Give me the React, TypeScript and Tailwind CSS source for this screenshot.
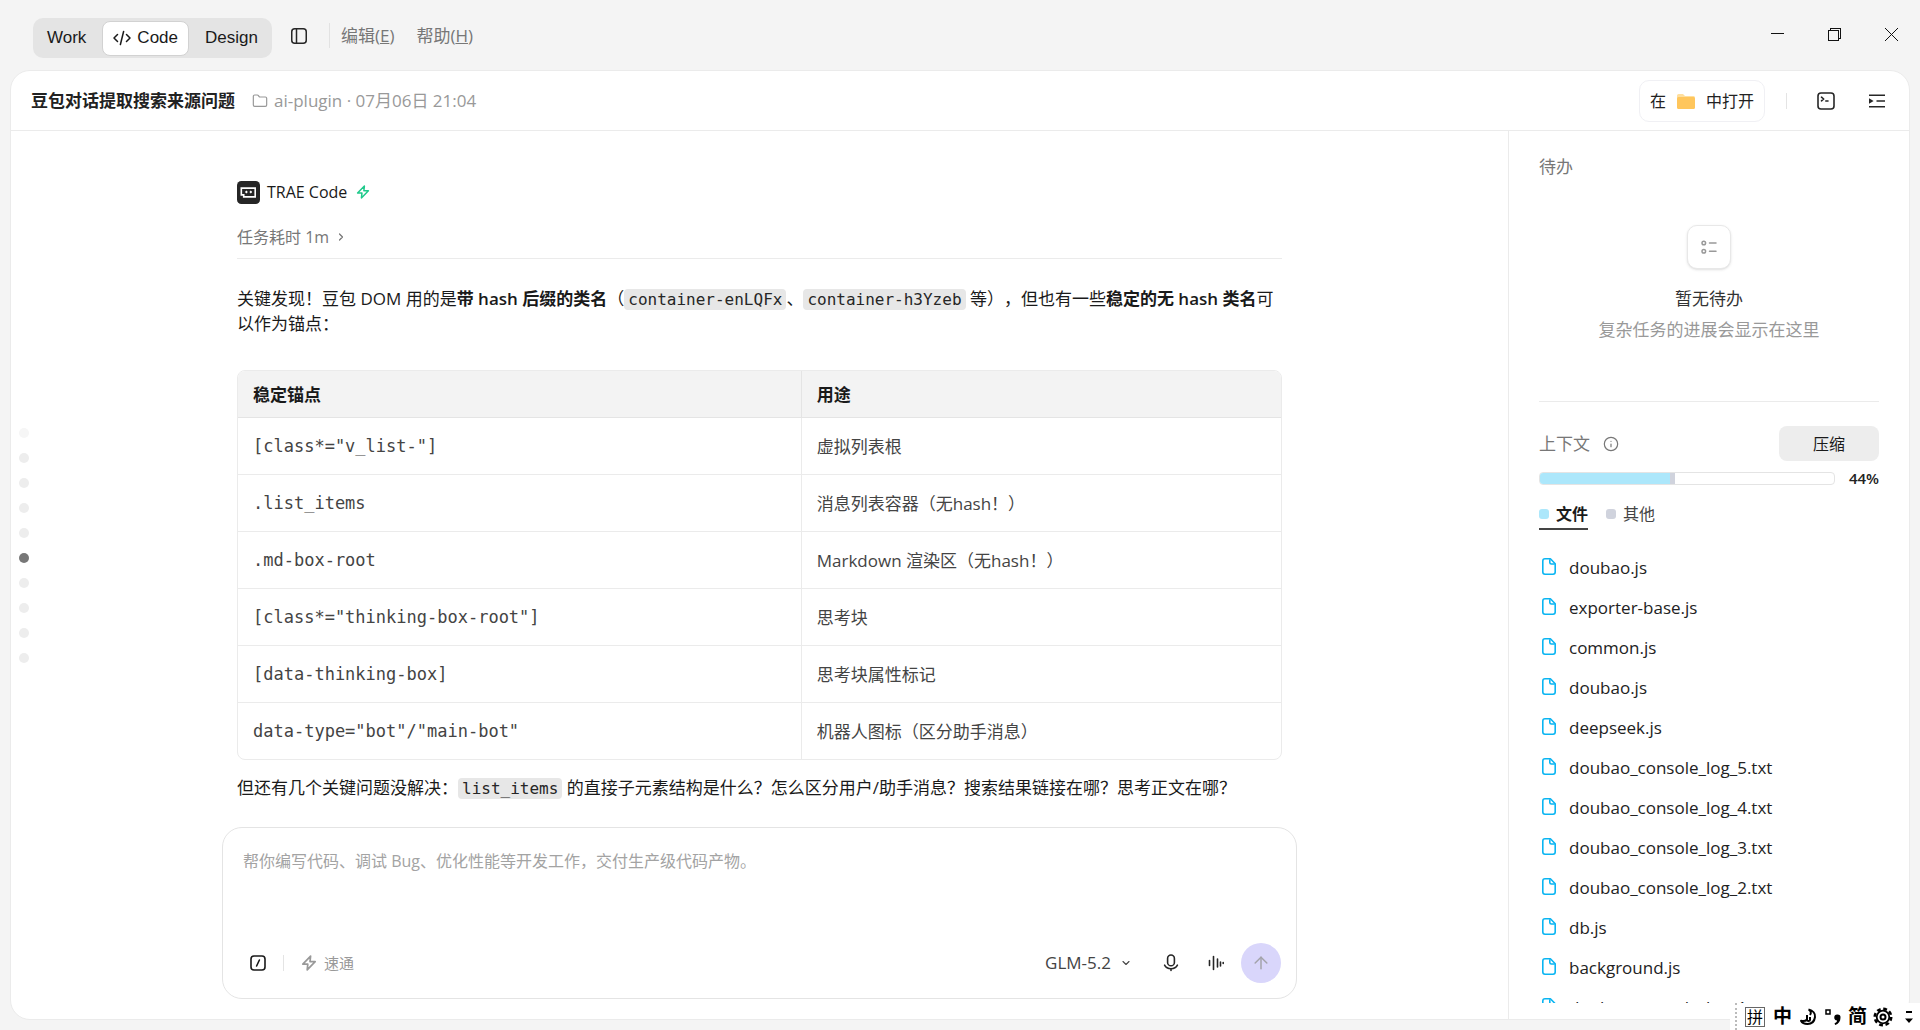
import { useState } from 'react';
import { ArrowUp, ChevronDown, ChevronRight, Folder, Info } from 'lucide-react';

interface AnchorRow {
  anchor: string;
  usage: string;
}

const anchorRows: AnchorRow[] = [
  { anchor: '[class*="v_list-"]', usage: '虚拟列表根' },
  { anchor: '.list_items', usage: '消息列表容器（无hash！）' },
  { anchor: '.md-box-root', usage: 'Markdown 渲染区（无hash！）' },
  { anchor: '[class*="thinking-box-root"]', usage: '思考块' },
  { anchor: '[data-thinking-box]', usage: '思考块属性标记' },
  { anchor: 'data-type="bot"/"main-bot"', usage: '机器人图标（区分助手消息）' },
];

const contextFiles = [
  'doubao.js',
  'exporter-base.js',
  'common.js',
  'doubao.js',
  'deepseek.js',
  'doubao_console_log_5.txt',
  'doubao_console_log_4.txt',
  'doubao_console_log_3.txt',
  'doubao_console_log_2.txt',
  'db.js',
  'background.js',
  'doubao_console_log_1.txt',
];

const usage = { files: 44.4, other: 1.6 };

function BoltIcon({ className = '' }: { className?: string }) {
  return (
    <svg viewBox="0 0 16 16" className={className} fill="none" stroke="currentColor" strokeWidth="1.7" strokeLinejoin="round">
      <path d="M9.6 1.2 1.8 9.2h5L6.2 14.8l8-8.2H9z" />
    </svg>
  );
}

function FileIcon() {
  return (
    <svg viewBox="0 0 14 17" className="mb-1 ml-px mr-px h-[17px] w-[14px] shrink-0 text-[#0ab5f2]" fill="none" stroke="currentColor" strokeWidth="1.6" strokeLinejoin="round">
      <path d="M3 .8h5.400l4.800 4.900v8.300A2.200 2.200 0 0 1 11 16.200H3A2.200 2.200 0 0 1 .8 14V3A2.200 2.200 0 0 1 3 .8z" />
      <path d="M7.800 1.200v3.200A1.600 1.600 0 0 0 9.400 6h3.400" />
    </svg>
  );
}

function InlineCode({ children }: { children: string }) {
  return (
    <code className="rounded bg-[#e7e7e7] px-1 py-px font-['DejaVu_Sans_Mono',monospace] text-base leading-4 text-[#262626]">
      {children}
    </code>
  );
}

function TitleBar() {
  const [mode, setMode] = useState('Code');

  return (
    <header className="flex h-[70px] shrink-0 items-start justify-between pl-[23px] pr-[5px]">
      <div className="flex items-center pt-[18px]">
        <div className="flex h-10 items-center gap-1 rounded-[10px] bg-[#e4e4e4] px-[2px] font-['Liberation_Sans',Arial,sans-serif] text-[17px] text-[#1a1a1a]">
          {['Work', 'Code', 'Design'].map((name) => (
            <button
              key={name}
              onClick={() => setMode(name)}
              className={`flex h-[35px] items-center gap-[6px] rounded-lg ${
                name === mode ? 'border border-[#d2d2d2] bg-white px-[10px]' : 'px-3'
              }`}
            >
              {name === 'Code' && (
                <svg viewBox="0 0 18 16" className="h-4 w-[18px]" fill="none" stroke="currentColor" strokeWidth="1.5" strokeLinecap="round" strokeLinejoin="round">
                  <path d="M4.500 4.500 1 8l3.500 3.500M13.500 4.500 17 8l-3.500 3.500M10.600 1.500 7.400 14.500" />
                </svg>
              )}
              {name}
            </button>
          ))}
        </div>
        <button aria-label="切换侧栏" className="mb-[5px] ml-[18px] text-[#262626]">
          <svg viewBox="0 0 18 18" className="h-[18px] w-[18px]" fill="none" stroke="currentColor" strokeWidth="1.5">
            <rect x="1.750" y="1.750" width="14.500" height="14.500" rx="3" />
            <path d="M6.500 2v14" />
          </svg>
        </button>
        <div className="mb-[6px] ml-[21px] flex items-center gap-[22px] border-l border-[#e2e2e2] pl-[11px] text-[17px] leading-[25px] text-[#777]">
          <button>
            编辑(<u>E</u>)
          </button>
          <button>
            帮助(<u>H</u>)
          </button>
        </div>
      </div>
      <div className="flex items-center gap-[30px] pt-[21px] text-[#111]">
        <button aria-label="最小化" className="p-[6px]">
          <svg viewBox="0 0 15 15" className="h-[15px] w-[15px]" stroke="currentColor" shapeRendering="crispEdges">
            <path d="M1 6.500h13" />
          </svg>
        </button>
        <button aria-label="还原" className="p-[6px]">
          <svg viewBox="0 0 15 15" className="h-[15px] w-[15px]" fill="none" stroke="currentColor" shapeRendering="crispEdges">
            <path d="M1.500 3.500h10v10h-10zM3.500 3.500v-2h10v10h-2" />
          </svg>
        </button>
        <button aria-label="关闭" className="p-[6px]">
          <svg viewBox="0 0 15 15" className="h-[15px] w-[15px]" stroke="currentColor">
            <path d="M1 1l13 13M14 1 1 14" />
          </svg>
        </button>
      </div>
    </header>
  );
}

function TaskHeader() {
  return (
    <div className="flex h-[60px] shrink-0 items-center justify-between border-b border-[#ebebeb] pl-5 pr-[23px]">
      <div className="flex items-center text-[17px]">
        <h1 className="font-bold text-[#222]">豆包对话提取搜索来源问题</h1>
        <Folder className="ml-[17px] mr-[6px] h-4 w-4 text-[#999]" strokeWidth={1.8} />
        <span className="text-[#999]">ai-plugin · 07月06日 21:04</span>
      </div>
      <div className="flex items-center">
        <button className="flex h-[42px] items-center gap-[11px] rounded-[10px] border border-[#f0f0f4] px-[10px] text-base text-[#222]">
          在
          <svg viewBox="0 0 18 16" className="h-4 w-[18px]">
            <path d="M0 2.500A1.500 1.500 0 0 1 1.500 1H6l2 2h8.500A1.500 1.500 0 0 1 18 4.500V8H0z" fill="#ffdf9e" />
            <rect y="4" width="18" height="12" rx="1.500" fill="#ffc65c" />
          </svg>
          中打开
        </button>
        <div className="ml-[21px] h-4 w-px bg-[#e4e4e4]" />
        <button aria-label="终端" className="ml-[30px] text-[#262626]">
          <svg viewBox="0 0 18 18" className="h-[18px] w-[18px]" fill="none" stroke="currentColor" strokeWidth="1.600" strokeLinecap="round" strokeLinejoin="round">
            <rect x="1" y="1" width="16" height="16" rx="3" />
            <path d="M4.500 5.200 6.700 7 4.500 8.800M8.800 9h2.200" />
          </svg>
        </button>
        <button aria-label="收起面板" className="ml-[33px] text-[#262626]">
          <svg viewBox="0 0 18 18" className="h-[18px] w-[18px]" fill="none" stroke="currentColor" strokeWidth="1.600">
            <path d="M1 3.200h16M8.500 9H17M1 14.800h16" />
            <path d="M1 6.200 5.600 9 1 11.800z" fill="currentColor" stroke="none" />
          </svg>
        </button>
      </div>
    </div>
  );
}

function Message() {
  return (
    <article className="mx-auto w-full max-w-[1045px] pt-[49px] text-[17px] leading-[25px] text-[#1a1a1a]">
      <div className="flex h-6 items-center text-base">
        <svg viewBox="0 0 24 24" className="h-[23px] w-[23px]">
          <rect width="24" height="24" rx="4.500" fill="#262626" />
          <path d="M4.500 7.500h14.500v9H7v-2H4.500z" fill="none" stroke="#fff" strokeWidth="1.700" />
          <path d="m9.800 9.900 1.500 1.600-1.500 1.600-1.500-1.600zM14.400 9.900l1.500 1.600-1.500 1.600-1.500-1.600z" fill="#fff" />
        </svg>
        <span className="ml-[7px]">TRAE Code</span>
        <BoltIcon className="ml-[9px] h-[14px] w-[14px] text-[#1fc98b]" />
      </div>
      <button className="mt-[21px] flex h-6 items-center gap-[6px] text-base text-[#777]">
        任务耗时 1m
        <ChevronRight className="h-3 w-3" strokeWidth={2.5} />
      </button>
      <hr className="mt-[9px] border-[#ebebeb]" />

      <p className="mt-[27px]">
        关键发现！豆包 DOM 用的是<strong className="font-semibold">带 hash 后缀的类名</strong>（
        <InlineCode>container-enLQFx</InlineCode>、<InlineCode>container-h3Yzeb</InlineCode>{' '}
        等），但也有一些<strong className="font-semibold">稳定的无 hash 类名</strong>可以作为锚点：
      </p>

      <div className="mt-[34px] overflow-hidden rounded-lg border border-[#ebebeb]">
        <table className="w-full border-collapse text-left">
          <thead className="bg-[#f3f3f3]">
            <tr className="h-[46px]">
              <th className="w-[54%] border-b border-r border-[#e4e4e4] px-[15px] pt-px font-bold">稳定锚点</th>
              <th className="border-b border-[#e4e4e4] px-[15px] pt-px font-bold">用途</th>
            </tr>
          </thead>
          <tbody className="text-[#444]">
            {anchorRows.map((row) => (
              <tr key={row.anchor} className="h-[57px] border-b border-[#ebebeb] last:border-b-0">
                <td className="border-r border-[#ebebeb] px-[15px] pt-[2px] font-['DejaVu_Sans_Mono',monospace]">{row.anchor}</td>
                <td className="px-[15px] pt-[2px]">{row.usage}</td>
              </tr>
            ))}
          </tbody>
        </table>
      </div>

      <p className="mt-[15px]">
        但还有几个关键问题没解决：<InlineCode>list_items</InlineCode>{' '}
        的直接子元素结构是什么？怎么区分用户/助手消息？搜索结果链接在哪？思考正文在哪？
      </p>
    </article>
  );
}

function Composer() {
  return (
    <form
      onSubmit={(e) => e.preventDefault()}
      className="mx-auto mb-5 flex h-[172px] w-full max-w-[1075px] shrink-0 flex-col justify-between rounded-[20px] border border-[#e4e4e4] bg-white pb-[15px] pl-5 pr-[15px] pt-[21px]"
    >
      <textarea
        aria-label="任务描述"
        placeholder="帮你编写代码、调试 Bug、优化性能等开发工作，交付生产级代码产物。"
        className="h-[72px] w-full resize-none text-base leading-6 outline-none placeholder:text-[#a3a3a3]"
      />
      <div className="flex h-10 items-center justify-between">
        <div className="flex items-center pl-[7px]">
          <button type="button" aria-label="命令" className="text-[#1a1a1a]">
            <svg viewBox="0 0 16 16" className="h-4 w-4" fill="none" stroke="currentColor" strokeWidth="1.600" strokeLinecap="round">
              <rect x="1" y="1" width="14" height="14" rx="3" />
              <path d="M9.400 5 6.600 11" />
            </svg>
          </button>
          <div className="ml-[17px] h-4 w-px bg-[#e4e4e4]" />
          <button type="button" className="ml-[17px] flex items-center gap-[7px] text-[15px] text-[#999]">
            <BoltIcon className="h-4 w-4" />
            速通
          </button>
        </div>
        <div className="flex items-center text-[#262626]">
          <button type="button" className="flex items-center gap-[9px] text-[17px] text-[#444]">
            GLM-5.2
            <ChevronDown className="h-3 w-3" strokeWidth={2.2} />
          </button>
          <button type="button" aria-label="语音输入" className="ml-[30px]">
            <svg viewBox="0 0 18 18" className="h-[18px] w-[18px]" fill="none" stroke="currentColor" strokeWidth="1.600" strokeLinecap="round">
              <rect x="5.600" y="1" width="6.800" height="10.800" rx="3.400" />
              <path d="M2.600 11.200c1.200 2.400 3.500 3.600 6.400 3.600s5.200-1.200 6.400-3.600M9 15v1.400" />
            </svg>
          </button>
          <button type="button" aria-label="语音对话" className="ml-[27px]">
            <svg viewBox="0 0 18 18" className="h-[18px] w-[18px]" stroke="currentColor" strokeWidth="1.600" strokeLinecap="round">
              <path d="M2.500 6.500v5M6.500 2.500v13M10.500 5v8M13.500 8v4M16.200 8.600v.8" />
            </svg>
          </button>
          <button aria-label="发送" className="ml-4 flex h-10 w-10 items-center justify-center rounded-full bg-[#d9d6fb] text-[#a3a3ab]">
            <ArrowUp className="h-5 w-5" strokeWidth={1.8} />
          </button>
        </div>
      </div>
    </form>
  );
}

function Sidebar() {
  const [tab, setTab] = useState('文件');

  return (
    <aside className="flex w-[401px] shrink-0 flex-col border-l border-[#ebebeb] pb-4 pl-[30px] pr-[30px] pt-[23px]">
      <h2 className="text-[17px] leading-[26px] text-[#777]">待办</h2>
      <div className="mt-[45px] flex flex-col items-center">
        <div className="flex h-11 w-11 items-center justify-center rounded-[10px] border border-[#e8e8e8] bg-white text-[#999] shadow-sm">
          <svg viewBox="0 0 16 16" className="h-4 w-4" fill="none" stroke="currentColor" strokeWidth="1.500" strokeLinecap="round">
            <circle cx="2.800" cy="4" r="1.800" />
            <circle cx="2.800" cy="12.200" r="1.800" />
            <path d="M8.500 4H15M8.500 12.200H15" />
          </svg>
        </div>
        <p className="mt-[17px] text-[17px] leading-[26px] text-[#333]">暂无待办</p>
        <p className="mt-[5px] text-[17px] leading-[26px] text-[#999]">复杂任务的进展会显示在这里</p>
      </div>
      <hr className="mt-[58px] border-[#ebebeb]" />

      <div className="mt-6 flex items-center justify-between">
        <h2 className="flex items-center gap-[13px] text-[17px] text-[#777]">
          上下文
          <Info className="h-4 w-4" strokeWidth={1.8} />
        </h2>
        <button className="h-[35px] w-[100px] rounded-lg bg-[#ededed] text-base text-[#1a1a1a]">压缩</button>
      </div>
      <div className="mt-[9px] flex h-4 items-center gap-[14px]">
        <div className="flex h-[13px] flex-1 overflow-hidden rounded border border-[#e4e4e4]">
          <div className="bg-[#ace7fb]" style={{ width: `${usage.files}%` }} />
          <div className="bg-[#d0d3dd]" style={{ width: `${usage.other}%` }} />
        </div>
        <span className="text-[15px] font-semibold text-[#222]">44%</span>
      </div>
      <div className="mt-[14px] flex gap-[18px] text-base leading-7">
        {[
          { name: '文件', dot: 'bg-[#ace7fb]' },
          { name: '其他', dot: 'bg-[#d0d3dd]' },
        ].map(({ name, dot }) => (
          <button
            key={name}
            onClick={() => setTab(name)}
            className={`flex items-center gap-[7px] border-b-2 ${
              tab === name ? 'border-[#444] font-semibold text-[#1a1a1a]' : 'border-transparent text-[#444]'
            }`}
          >
            <span className={`h-[10px] w-[10px] rounded-[3px] ${dot}`} />
            {name}
          </button>
        ))}
      </div>
      <ul className="mt-[18px] min-h-0 flex-1 overflow-hidden text-[17px] text-[#222]">
        {contextFiles.map((file, i) => (
          <li key={i} className="flex h-10 items-center gap-3 pl-[2px]">
            <FileIcon />
            {file}
          </li>
        ))}
      </ul>
    </aside>
  );
}

// 输入法状态条，浮在窗口右下角
function ImeBar() {
  return (
    <div className="fixed bottom-0 right-0 flex h-[27px] w-[190px] items-center bg-white pl-[5px] text-[19px] leading-none text-black">
      <div className="h-full border-l-2 border-dotted border-[#bbb]" />
      <span className="ml-2 flex h-5 w-5 items-center justify-center border border-[#666] text-base">拼</span>
      <span className="ml-2 font-bold">中</span>
      <svg viewBox="0 0 18 18" className="ml-[7px] h-[18px] w-[18px]" fill="none" stroke="currentColor" strokeWidth="2" strokeLinejoin="round">
        <path d="M9.500 1.500c2.500 1.500 3 3.500 1.500 5.500M9.500 1.500c4.500 1 7 4 6.500 7.500-.6 4.500-3.600 7-7.500 7-3 0-5.500-1.200-6.500-3.200 2.500.6 4.700.2 6-1.300M8 7v5c0 1.400 3 1.400 3 0V9" />
      </svg>
      <svg viewBox="0 0 18 18" className="ml-[7px] h-[18px] w-[18px]" fill="currentColor">
        <path d="M2 2h4v4H2z" fill="none" stroke="currentColor" strokeWidth="1.500" />
        <path d="M13.500 6.500a3 3 0 0 1 3 3.200c0 3.600-2 6.300-5.300 7.300l-.7-1.500c1.500-.7 2.400-1.600 2.600-2.900a3 3 0 0 1 .4-6.100z" />
      </svg>
      <span className="ml-[6px] font-bold">简</span>
      <svg viewBox="0 0 20 20" className="ml-[6px] h-5 w-5" fill="none" stroke="currentColor">
        <circle cx="10" cy="10" r="6.300" strokeWidth="1.800" />
        <circle cx="10" cy="10" r="8.200" strokeWidth="2.600" strokeDasharray="3.800 2.640" />
        <circle cx="10" cy="10" r="2.500" strokeWidth="2" />
      </svg>
      <svg viewBox="0 0 8 16" className="ml-3 h-4 w-2" fill="currentColor">
        <path d="M1 2h6v2H1zM0 9.500h8L4 14z" />
      </svg>
    </div>
  );
}

export default function App() {
  return (
    <div className="flex h-screen flex-col overflow-hidden bg-[#f4f4f4] px-[10px] pb-[10px] font-['Open_Sans','Noto_Sans_CJK_SC',sans-serif] [text-spacing-trim:space-all]">
      <TitleBar />
      <div className="flex min-h-0 flex-1 flex-col overflow-hidden rounded-[20px] border border-[#ebebeb] bg-white">
        <TaskHeader />
        <div className="flex min-h-0 flex-1">
          <main className="grid min-w-0 flex-1 grid-cols-[40px_1fr_40px]">
            <nav aria-label="对话定位" className="flex flex-col justify-center gap-[15px] pb-[60px] pl-2">
              {Array.from({ length: 10 }, (_, i) => (
                <button
                  key={i}
                  aria-label={`第 ${i + 1} 条`}
                  className={`h-[10px] w-[10px] rounded-full ${
                    i === 5 ? 'bg-[#777]' : i === 0 ? 'bg-[#f6f6f6]' : 'bg-[#ededed]'
                  }`}
                />
              ))}
            </nav>
            <div className="flex min-h-0 min-w-0 flex-col">
              <div className="min-h-0 flex-1 overflow-hidden">
                <Message />
              </div>
              <Composer />
            </div>
          </main>
          <Sidebar />
        </div>
      </div>
      <ImeBar />
    </div>
  );
}
